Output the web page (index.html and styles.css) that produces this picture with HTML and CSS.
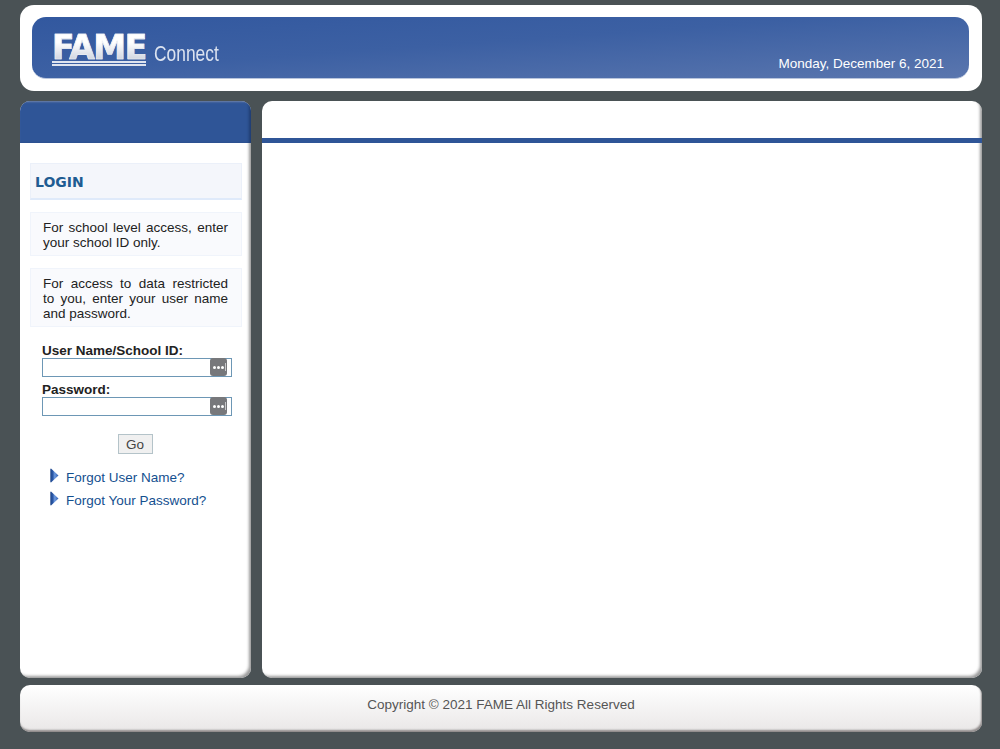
FILE: index.html
```html
<!DOCTYPE html>
<html lang="en">
<head>
    <meta charset="UTF-8">
    <title>FAME Connect</title>
    <link rel="stylesheet" href="styles.css">
</head>
<body>
    <svg class="defs" width="0" height="0">
        <linearGradient id="arrowFill" x1="0" y1="0" x2="1" y2="0">
            <stop offset="0" stop-color="#1d4488"/>
            <stop offset="0.3" stop-color="#2a58a8"/>
            <stop offset="0.55" stop-color="#6f9be0"/>
            <stop offset="1" stop-color="#2c5cae"/>
        </linearGradient>
    </svg>
    <div class="page">
        <div class="header">
            <div class="banner">
                <div class="logo">
                    <div class="logo-mark">
                        <span class="logo-word">FAME</span>
                        <span class="logo-rule"></span>
                        <span class="logo-rule"></span>
                    </div>
                    <span class="logo-connect">Connect</span>
                </div>
                <div class="date">Monday, December 6, 2021</div>
            </div>
        </div>

        <div class="columns">
            <div class="side">
                <div class="side-top"></div>
                <div class="side-body">
                    <div class="login-title">LOGIN</div>
                    <div class="note">For school level access, enter your school ID only.</div>
                    <div class="note">For access to data restricted to you, enter your user name and password.</div>

                    <form class="login-form">
                        <label class="field-label" for="user">User Name/School ID:</label>
                        <div class="field">
                            <input class="field-input" id="user" type="text">
                            <span class="field-key"><i></i><i></i><i></i></span>
                        </div>
                        <label class="field-label" for="pass">Password:</label>
                        <div class="field">
                            <input class="field-input" id="pass" type="password">
                            <span class="field-key"><i></i><i></i><i></i></span>
                        </div>
                        <div class="go-row">
                            <button class="go-button" type="button">Go</button>
                        </div>
                    </form>

                    <ul class="links">
                        <li>
                            <svg class="arrow" width="9" height="15" viewBox="0 0 9 15"><path d="M1 0.5 Q0.3 0.5 0.3 1.5 L0.3 13.5 Q0.3 14.5 1 14.5 L8.5 7.5 Z" fill="url(#arrowFill)"/></svg>
                            <a href="#">Forgot User Name?</a>
                        </li>
                        <li>
                            <svg class="arrow" width="9" height="15" viewBox="0 0 9 15"><path d="M1 0.5 Q0.3 0.5 0.3 1.5 L0.3 13.5 Q0.3 14.5 1 14.5 L8.5 7.5 Z" fill="url(#arrowFill)"/></svg>
                            <a href="#">Forgot Your Password?</a>
                        </li>
                    </ul>
                </div>
            </div>

            <div class="main">
                <div class="main-top"></div>
            </div>
        </div>

        <div class="footer">Copyright © 2021 FAME All Rights Reserved</div>
    </div>
</body>
</html>
```

FILE: styles.css
```css
* {
    margin: 0;
    padding: 0;
    box-sizing: border-box;
}

body {
    font-family: "Liberation Sans", Arial, sans-serif;
    font-size: 13.5px;
    background: #4a5255;
    color: #222;
}

.defs {
    display: block;
    height: 0;
}

.page {
    width: 1000px;
    height: 749px;
    padding: 5px 18px 0 20px;
    overflow: hidden;
}

.header {
    height: 86px;
    padding: 12px 13px 12px 12px;
    background: #fff;
    border-radius: 14px;
}

.banner {
    height: 62px;
    display: flex;
    justify-content: space-between;
    align-items: flex-end;
    padding: 0 25px 6px 20px;
    border-radius: 14px;
    background: linear-gradient(176deg, #32589f 0%, #3c60a3 45%, #5a76ae 100%);
    border-bottom: 1px solid #b9c5dc;
}

.logo {
    display: flex;
    align-items: flex-end;
    gap: 8px;
    margin-bottom: 6px;
}

.logo-mark {
    display: flex;
    flex-direction: column;
    width: 94px;
}

.logo-word {
    height: 27px;
    font-family: "DejaVu Sans", Verdana, sans-serif;
    font-size: 33px;
    line-height: 29px;
    font-weight: bold;
    letter-spacing: -1.5px;
    background: linear-gradient(180deg, #fff 35%, #cfd4df 100%);
    -webkit-background-clip: text;
    background-clip: text;
    color: transparent;
    -webkit-text-stroke: 0.6px #eef0f4;
}

.logo-rule {
    height: 2px;
    margin-top: 1px;
    background: #dfe4ef;
}

.logo-connect {
    width: 65px;
    font-size: 22px;
    line-height: 24px;
    color: #dce3f0;
    white-space: nowrap;
    transform: scaleX(0.79);
    transform-origin: left center;
}

.date {
    line-height: 16px;
    color: #fff;
}

.columns {
    display: flex;
    gap: 11px;
    height: 577px;
    margin-top: 10px;
}

.side {
    width: 231px;
    background: #fff;
    border-radius: 10px;
    overflow: hidden;
    box-shadow: inset -3px -3px 3px -1px #9a9a9a;
}

.side-top {
    height: 42px;
    background: #2f5597;
    box-shadow: inset -3px 0 3px -1px #1f3c70, inset 0 2px 2px -1px #7a8fb5;
}

.side-body {
    padding: 20px 9px 0 10px;
}

.login-title {
    height: 37px;
    padding-left: 4px;
    font-family: "DejaVu Sans", Verdana, sans-serif;
    font-size: 14px;
    font-weight: bold;
    line-height: 36px;
    color: #1f5c92;
    background: #f4f6fb;
    border: 1px solid #ebf0f9;
    border-bottom: 2px solid #dfeafa;
}

.note {
    margin-top: 12px;
    padding: 7px 13px 5px 12px;
    line-height: 15px;
    text-align: justify;
    background: #f9fafd;
    border: 1px solid #f0f4fb;
}

.login-form {
    margin-top: 15px;
    padding: 0 10px 0 12px;
}

.field-label {
    display: block;
    height: 16px;
    font-weight: bold;
    line-height: 18px;
}

.field {
    position: relative;
    height: 19px;
    margin-bottom: 4px;
}

.field-input {
    display: block;
    width: 100%;
    height: 19px;
    background: #fff;
    border: 1px solid #6d97b5;
    outline: none;
}

.field-key {
    position: absolute;
    top: 0;
    right: 5px;
    width: 17px;
    height: 18px;
    display: flex;
    align-items: center;
    justify-content: center;
    gap: 1px;
    background: #77787b;
    border-radius: 3px;
}

.field-key i {
    width: 3px;
    height: 3px;
    background: #fff;
    border-radius: 50%;
}

.field-key::after {
    content: "";
    position: absolute;
    top: 5px;
    right: 1px;
    width: 1px;
    height: 8px;
    background: #c9cacc;
}

.go-row {
    display: flex;
    justify-content: center;
    margin-top: 18px;
    padding-right: 4px;
}

.go-button {
    width: 35px;
    height: 20px;
    font-family: "Liberation Sans", Arial, sans-serif;
    font-size: 13.5px;
    color: #444;
    background: #f0f0f0;
    border: 1px solid #b4c3c9;
}

.links {
    list-style: none;
    margin-top: 12px;
    padding-left: 20px;
}

.links li {
    display: flex;
    align-items: flex-start;
    gap: 7px;
    height: 23px;
    line-height: 23px;
}

.links a {
    color: #14508f;
    text-decoration: none;
}

.arrow {
    margin-top: 2px;
}

.main {
    width: 720px;
    background: #fff;
    border-radius: 10px;
    overflow: hidden;
    box-shadow: inset -3px -3px 3px -1px #9a9a9a;
}

.main-top {
    height: 42px;
    border-bottom: 5px solid #2f5597;
}

.footer {
    height: 47px;
    margin-top: 7px;
    text-align: center;
    line-height: 39px;
    color: #555;
    border-radius: 10px;
    background: linear-gradient(180deg, #fff 0%, #e9e7e7 100%);
    box-shadow: inset -1px -2px 2px #8f8a8a;
}
```
